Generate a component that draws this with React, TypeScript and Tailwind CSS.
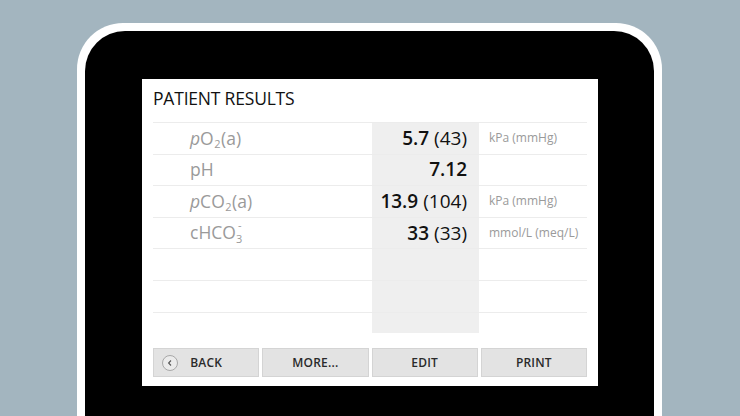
import React from "react";

const font = { fontFamily: '"Open Sans", "Noto Sans", sans-serif' };

type Row = { label?: React.ReactNode; main?: string; paren?: string; unit?: string };

const Sub = ({ children }: { children: React.ReactNode }) => (
  <span className="relative top-[5px] text-[11px] mx-[0.5px]">{children}</span>
);

const rows: Row[] = [
  {
    label: (
      <>
        <span className="italic">p</span>O<Sub>2</Sub>(a)
      </>
    ),
    main: "5.7",
    paren: "(43)",
    unit: "kPa (mmHg)",
  },
  { label: <>pH</>, main: "7.12" },
  {
    label: (
      <>
        <span className="italic">p</span>CO<Sub>2</Sub>(a)
      </>
    ),
    main: "13.9",
    paren: "(104)",
    unit: "kPa (mmHg)",
  },
  {
    label: (
      <>
        cHCO
        <span className="relative inline-block w-[7px] text-[11px] leading-none">
          <span className="absolute left-[2px] top-[-9px]">-</span>
          <span className="relative top-[5px]">3</span>
        </span>
      </>
    ),
    main: "33",
    paren: "(33)",
    unit: "mmol/L (meq/L)",
  },
  {},
  {},
  {},
];

function Button({ children, icon }: { children: React.ReactNode; icon?: boolean }) {
  return (
    <div className="relative flex-1 h-[29px] bg-[#e3e3e3] border border-[#d4d4d4] flex items-center justify-center text-[12px] font-semibold text-[#2a2a2a] tracking-[0.2px]">
      {icon && (
        <span className="absolute left-[8px] top-[6px] w-[16px] h-[16px] rounded-full border border-[#a8a8a8] bg-[#ebebeb] flex items-center justify-center">
          <svg width="8" height="8" viewBox="0 0 8 8">
            <path d="M5 1.5 L2.6 4 L5 6.5" fill="none" stroke="#555" strokeWidth="1.1" />
          </svg>
        </span>
      )}
      <span>{children}</span>
    </div>
  );
}

export default function App() {
  return (
    <div className="w-[740px] h-[416px] bg-[#a3b5bf] overflow-hidden pt-[23px] pl-[77px]" style={font}>
      <div className="w-[585px] h-[420px] bg-white rounded-t-[46px] p-[8px]">
        <div className="h-full bg-black rounded-t-[40px] pt-[48px] pl-[57px]">
          <div className="w-[456px] h-[307px] bg-white px-[11px] flex flex-col">
            <div className="h-[43px] pt-[6px] text-[17.5px] text-[#111] tracking-[-0.2px]">PATIENT RESULTS</div>
            <div className="h-[211px] overflow-hidden">
              {rows.map((r, i) => (
                <div key={i} className="grid grid-cols-[219px_107px_110px] h-[31.6px] border-t border-[#ececec]">
                  <div className="pl-[37px] flex items-center text-[17.5px] text-[#9a9a9a] leading-none">{r.label}</div>
                  <div className="bg-[#efefef] flex items-center justify-end pr-[12px] text-[19px] text-[#111] leading-none">
                    {r.main && <span className="font-semibold">{r.main}</span>}
                    {r.paren && <span className="ml-[5px]">{r.paren}</span>}
                  </div>
                  <div className="pl-[10px] flex items-center text-[12px] text-[#9a9a9a]">{r.unit}</div>
                </div>
              ))}
            </div>
            <div className="mt-[15px] flex gap-[3px]">
              <Button icon>BACK</Button>
              <Button>MORE...</Button>
              <Button>EDIT</Button>
              <Button>PRINT</Button>
            </div>
          </div>
        </div>
      </div>
    </div>
  );
}
